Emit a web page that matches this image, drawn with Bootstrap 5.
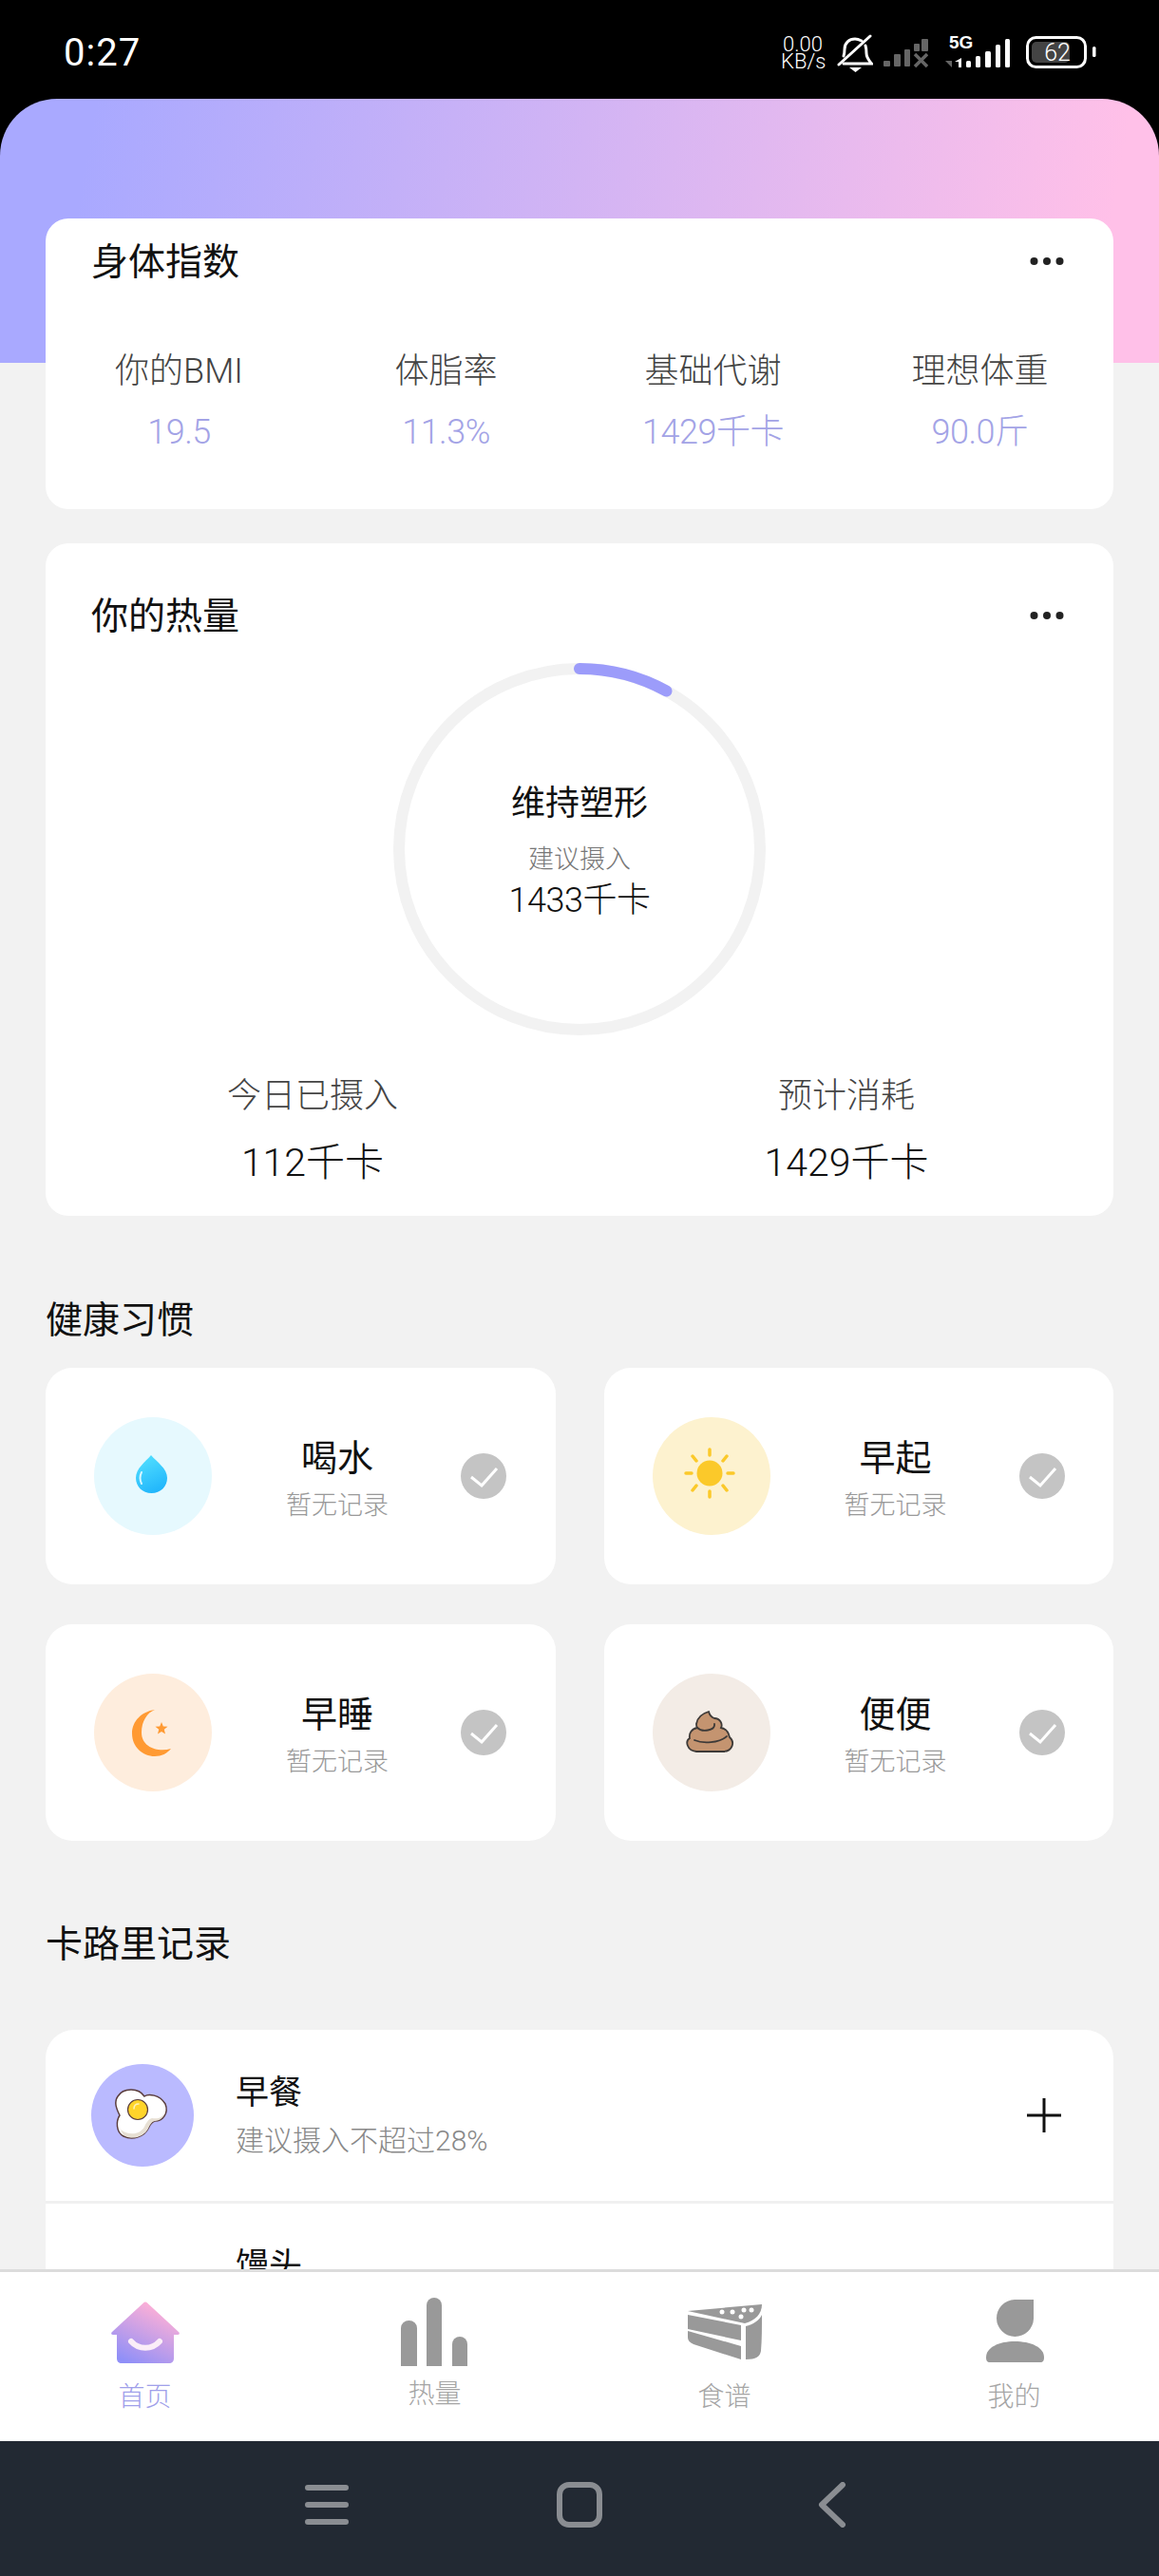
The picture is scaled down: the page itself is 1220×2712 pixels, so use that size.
<!DOCTYPE html>
<html lang="zh-CN">
  <head>
    <meta charset="UTF-8" />
    <meta name="viewport" content="width=device-width, initial-scale=1.0" />
    <title>健康</title>
    <link
      href="https://cdn.jsdelivr.net/npm/bootstrap@5.3.2/dist/css/bootstrap.min.css"
      rel="stylesheet"
    />
    <style>
      body {
        background: #000;
        font-family: Roboto, "Noto Sans CJK SC", sans-serif;
        font-weight: 300;
        color: #111;
      }
      svg {
        display: block;
        flex-shrink: 0;
      }
      /* status bar */
      .status-bar {
        height: 104px;
        padding: 8px 65px 0 67px;
        color: #fff;
      }
      .status-time {
        font-size: 40px;
        line-height: 46px;
        font-weight: 400;
        letter-spacing: 1px;
      }
      .status-net {
        width: 46px;
        font-size: 22px;
        line-height: 18px;
        text-align: center;
        margin-right: 13px;
      }
      .status-signal {
        margin-left: 8px;
      }
      .status-cell {
        margin-left: 18px;
      }
      .status-battery {
        margin-left: 16px;
      }
      /* page */
      .page-main {
        overflow: hidden;
        min-height: 0;
        padding: 126px 48px 0;
        border-radius: 60px 60px 0 0;
        background: linear-gradient(100deg, #a9a9ff 8%, #ffc0e8 94%) top / 100% 278px no-repeat, #f2f2f2;
      }
      .panel {
        border: 0;
        background: #fff;
        border-radius: 24px;
      }
      .panel-head {
        padding: 0 48px;
      }
      .panel-title,
      .section-title {
        font-size: 39px;
        line-height: 46px;
        font-weight: 400;
        color: #111;
      }
      .body-panel {
        height: 306px;
      }
      .body-panel .panel-head {
        padding-top: 23px;
      }
      .stat-row {
        margin-top: 70px;
      }
      .stat-label {
        font-size: 36px;
        line-height: 44px;
        color: #444;
      }
      .stat-value {
        margin-top: 20px;
        font-size: 36px;
        line-height: 44px;
        letter-spacing: -0.5px;
        color: #a3a3e6;
      }
      .heat-panel {
        height: 708px;
        margin-top: 36px;
      }
      .heat-panel .panel-head {
        padding-top: 54px;
      }
      .ring-box {
        width: 392px;
        height: 392px;
        margin: 26px auto 0;
        padding-top: 126px;
      }
      .ring-box svg {
        top: 0;
        left: 0;
      }
      .ring-goal {
        font-size: 36px;
        line-height: 44px;
        font-weight: 400;
        color: #111;
      }
      .ring-hint {
        margin-top: 20px;
        font-size: 27px;
        line-height: 34px;
        color: #777;
      }
      .ring-kcal {
        margin-top: 4px;
        font-size: 36px;
        line-height: 44px;
        letter-spacing: -0.5px;
        color: #111;
      }
      .sum-row {
        margin-top: 42px;
      }
      .sum-label {
        font-size: 36px;
        line-height: 44px;
        color: #444;
      }
      .sum-value {
        margin-top: 23px;
        font-size: 41px;
        line-height: 50px;
        color: #111;
      }
      .section-title {
        margin-top: 87px;
      }
      .habit-grid {
        display: grid;
        grid-template-columns: 1fr 1fr;
        gap: 42px 51px;
        margin-top: 27px;
      }
      .habit-item {
        height: 228px;
        padding-left: 51px;
        border-radius: 28px;
      }
      .habit-icon {
        width: 124px;
        height: 124px;
        border-radius: 50%;
      }
      .icon-water { background: #e6f9fe; }
      .icon-sun { background: #fdf2cf; }
      .icon-moon { background: #feeddd; }
      .icon-poop { background: #f3ece6; }
      .habit-text {
        width: 180px;
        margin-left: 42px;
        padding-top: 7px;
      }
      .habit-name {
        font-size: 38px;
        line-height: 44px;
        font-weight: 400;
        color: #111;
      }
      .habit-sub {
        margin-top: 11px;
        font-size: 27px;
        line-height: 34px;
        color: #999;
      }
      .habit-check {
        margin-left: 40px;
      }
      .meal-title {
        margin-top: 86px;
      }
      .meal-panel {
        margin-top: 67px;
        border-radius: 30px 30px 0 0;
        height: 400px;
      }
      .meal-head {
        height: 183px;
        padding: 0 55px 1px 48px;
        border-bottom: 3px solid #f0f0f0;
      }
      .meal-icon {
        width: 108px;
        height: 108px;
        border-radius: 50%;
        background: #babaff;
        margin-right: 44px;
      }
      .meal-text {
        padding-top: 3px;
      }
      .meal-name {
        font-size: 35px;
        line-height: 44px;
        font-weight: 400;
        color: #111;
      }
      .meal-sub {
        margin-top: 8px;
        font-size: 30px;
        line-height: 40px;
        color: #888;
      }
      .food-name {
        padding: 44px 0 0 200px;
        font-size: 35px;
        line-height: 44px;
        font-weight: 400;
      }
      /* tab bar */
      .tab-bar {
        height: 181px;
        padding-top: 27px;
        background: #fff;
        border-top: 3px solid #dcdcdc;
      }
      .tab-label {
        margin-top: 13px;
        font-size: 28px;
        line-height: 40px;
        color: #a5a5a5;
      }
      .tab-label.active {
        color: #a0a0ea;
      }
      .tab-label.raised {
        margin-top: 10px;
      }
      .nav-bar {
        height: 142px;
        padding: 0 8px 8px 0;
        background: #222933;
      }
      .nav-home {
        margin: 0 227px 0 219px;
      }
    </style>
  </head>
  <body class="m-0">
    <div class="d-flex flex-column vh-100 overflow-hidden">
      <!-- status bar -->
      <div class="status-bar d-flex align-items-center justify-content-between flex-shrink-0">
        <div class="status-time">0:27</div>
        <div class="d-flex align-items-center">
          <div class="status-net"><div>0.00</div><div>KB/s</div></div>
          <svg width="38" height="40" viewBox="0 0 38 40" fill="none" stroke="#fff" stroke-width="3" stroke-linecap="round">
            <path d="M30 12C31 15 31 18 31 20C31 25 34 28 36.5 31H7" />
            <path d="M7 23C8 20 8 18 8 16C8 9 13 5 19 5C22 5 24 6 26 7" />
            <path d="M2 32L35 2" />
            <path d="M13 35H26L19.5 40Z" fill="#fff" stroke="none" />
          </svg>
          <svg class="status-signal" width="50" height="40" viewBox="-3 0 50 40" fill="#666">
            <rect x="0" y="28" width="7" height="6" rx="1" />
            <rect x="11" y="21" width="7" height="13" rx="1" />
            <rect x="22" y="16" width="6" height="18" rx="1" />
            <rect x="32" y="10" width="6" height="8" rx="1" />
            <rect x="40" y="5" width="7" height="13" rx="1" />
            <path d="M33 21L46 34M46 21L33 34" stroke="#666" stroke-width="3.5" fill="none" />
          </svg>
          <svg class="status-cell" width="69" height="44" viewBox="0 -2 69 44" fill="#fff">
            <text x="4" y="15" font-family="Liberation Sans, sans-serif" font-size="19" font-weight="700">5G</text>
            <path d="M0 28H7V35Z" fill="#666" />
            <path d="M10 29L17 25V35H14V29Z" />
            <rect x="22" y="28" width="5" height="7" rx="1.5" />
            <rect x="32" y="23" width="5" height="12" rx="1.5" />
            <rect x="42" y="18" width="6" height="17" rx="1.5" />
            <rect x="53" y="11" width="5" height="24" rx="1.5" />
            <rect x="63" y="5" width="5" height="30" rx="1.5" />
          </svg>
          <svg class="status-battery" width="75" height="40" viewBox="0 0 75 40">
            <rect x="1.5" y="3.5" width="61" height="31" rx="9" fill="none" stroke="#fff" stroke-width="3" />
            <rect x="6" y="8" width="40" height="22" rx="5" fill="#444" />
            <text x="33" y="28" text-anchor="middle" font-family="Roboto, sans-serif" font-size="25" font-weight="300" fill="#fff">62</text>
            <rect x="70" y="13" width="3.5" height="11" rx="1.5" fill="#fff" />
          </svg>
        </div>
      </div>

      <!-- scrolling content -->
      <main class="page-main flex-grow-1">
        <div class="card panel body-panel">
          <div class="panel-head d-flex justify-content-between align-items-center">
            <div class="panel-title">身体指数</div>
            <svg class="me-1" width="36" height="10" viewBox="0 0 36 10" fill="#222"><circle cx="4.5" cy="4" r="4" /><circle cx="18" cy="4" r="4" /><circle cx="31.5" cy="4" r="4" /></svg>
          </div>
          <div class="row g-0 row-cols-4 text-center stat-row">
            <div class="col"><div class="stat-label">你的BMI</div><div class="stat-value">19.5</div></div>
            <div class="col"><div class="stat-label">体脂率</div><div class="stat-value">11.3%</div></div>
            <div class="col"><div class="stat-label">基础代谢</div><div class="stat-value">1429千卡</div></div>
            <div class="col"><div class="stat-label">理想体重</div><div class="stat-value">90.0斤</div></div>
          </div>
        </div>

        <div class="card panel heat-panel">
          <div class="panel-head d-flex justify-content-between align-items-center">
            <div class="panel-title">你的热量</div>
            <svg class="me-1" width="36" height="10" viewBox="0 0 36 10" fill="#222"><circle cx="4.5" cy="4" r="4" /><circle cx="18" cy="4" r="4" /><circle cx="31.5" cy="4" r="4" /></svg>
          </div>
          <div class="ring-box position-relative text-center">
            <svg class="position-absolute" width="392" height="392" viewBox="0 0 392 392" fill="none" stroke-width="12">
              <circle cx="196" cy="196" r="190" stroke="#f2f2f2" />
              <circle cx="196" cy="196" r="190" stroke="#9c9cfa" stroke-linecap="round" stroke-dasharray="95.5 1200" transform="rotate(-90 196 196)" />
            </svg>
            <div class="position-relative">
              <div class="ring-goal">维持塑形</div>
              <div class="ring-hint">建议摄入</div>
              <div class="ring-kcal">1433千卡</div>
            </div>
          </div>
          <div class="row g-0 text-center sum-row">
            <div class="col-6"><div class="sum-label">今日已摄入</div><div class="sum-value">112千卡</div></div>
            <div class="col-6"><div class="sum-label">预计消耗</div><div class="sum-value">1429千卡</div></div>
          </div>
        </div>

        <div class="section-title">健康习惯</div>
        <div class="habit-grid">
          <div class="card panel habit-item flex-row align-items-center">
            <div class="habit-icon icon-water">
              <svg width="124" height="124" viewBox="0 0 124 124">
                <defs><linearGradient id="dropFill" x1="0.3" y1="0" x2="0.7" y2="1"><stop offset="0" stop-color="#52dfff" /><stop offset="1" stop-color="#1fb4fb" /></linearGradient></defs>
                <path d="M60 40C54 47 44 54 44 64C44 73 51 80 60.500 80C70 80 77 73 77 64C77 54 66 47 60 40Z" fill="url(#dropFill)" />
                <path d="M50 58C48 62 48 66 50 70" fill="none" stroke="#d8f6ff" stroke-width="2" stroke-linecap="round" />
              </svg>
            </div>
            <div class="habit-text text-center"><div class="habit-name">喝水</div><div class="habit-sub">暂无记录</div></div>
            <svg class="habit-check" width="48" height="48" viewBox="0 0 48 48"><circle cx="24" cy="24" r="24" fill="#c4c4c4" /><path d="M11 25L22 34L38 16" fill="none" stroke="#fff" stroke-width="3" /></svg>
          </div>
          <div class="card panel habit-item flex-row align-items-center">
            <div class="habit-icon icon-sun">
              <svg width="124" height="124" viewBox="0 0 124 124">
                <circle cx="60" cy="59" r="13.500" fill="#fbc92a" />
                <path d="M60 34V40M60 78V84M35 59H41M79 59H85M42 41L46 46M78 41L74 46M42 77L46 72M78 77L74 72" stroke="#fbc92a" stroke-width="3.500" stroke-linecap="round" />
              </svg>
            </div>
            <div class="habit-text text-center"><div class="habit-name">早起</div><div class="habit-sub">暂无记录</div></div>
            <svg class="habit-check" width="48" height="48" viewBox="0 0 48 48"><circle cx="24" cy="24" r="24" fill="#c4c4c4" /><path d="M11 25L22 34L38 16" fill="none" stroke="#fff" stroke-width="3" /></svg>
          </div>
          <div class="card panel habit-item flex-row align-items-center">
            <div class="habit-icon icon-moon">
              <svg width="124" height="124" viewBox="0 0 124 124" fill="#ff9a33">
                <path d="M64 38C50 40 40 50 40 63C40 77 51 87 64 87C71 87 77 84 81 79C68 83 50 78 50 62C50 50 56 41 64 38Z" />
                <path d="M71 51L72.800 55.500L77.500 55.800L73.800 58.800L75 63.500L71 60.900L67 63.500L68.200 58.800L64.500 55.800L69.200 55.500Z" />
              </svg>
            </div>
            <div class="habit-text text-center"><div class="habit-name">早睡</div><div class="habit-sub">暂无记录</div></div>
            <svg class="habit-check" width="48" height="48" viewBox="0 0 48 48"><circle cx="24" cy="24" r="24" fill="#c4c4c4" /><path d="M11 25L22 34L38 16" fill="none" stroke="#fff" stroke-width="3" /></svg>
          </div>
          <div class="card panel habit-item flex-row align-items-center">
            <div class="habit-icon icon-poop">
              <svg width="124" height="124" viewBox="0 0 124 124" stroke="#3d3a38" stroke-width="1.800" stroke-linecap="round">
                <path d="M59 40C52 42 47 46 46 53C46 55 46 56 47 57C41 58 38 63 39 68C34 71 36 81 46 82H74C84 82 87 72 81 67C80 62 77 58 72 57C74 53 71 47 65 47C62 46 60 44 59 40Z" fill="#c49470" />
                <path d="M47 57C52 62 66 60 65 53M44 70C53 74 70 73 78 66" fill="none" />
              </svg>
            </div>
            <div class="habit-text text-center"><div class="habit-name">便便</div><div class="habit-sub">暂无记录</div></div>
            <svg class="habit-check" width="48" height="48" viewBox="0 0 48 48"><circle cx="24" cy="24" r="24" fill="#c4c4c4" /><path d="M11 25L22 34L38 16" fill="none" stroke="#fff" stroke-width="3" /></svg>
          </div>
        </div>

        <div class="section-title meal-title">卡路里记录</div>
        <div class="card panel meal-panel">
          <div class="meal-head d-flex align-items-center">
            <div class="meal-icon flex-shrink-0">
              <svg width="108" height="108" viewBox="0 0 108 108">
                <path d="M42 27C50 27 54 31 56 34C60 31 72 32 78 42C82 52 75 60 67 60C63 61 62 64 60 68C56 76 44 81 34 76C26 72 26 60 30 54C26 46 24 40 28 34C31 29 37 27 42 27Z" fill="#fff" stroke="#5a3d3d" stroke-width="1.500" />
                <path d="M78 50C75 57 70 58 64 57C60 58 58 62 56 66C52 74 40 76 31 69C33 73 34 75 36 76C45 80 56 76 60 68C62 64 63 61 67 60C72 60 77 56 78 50Z" fill="#e7e0d4" />
                <ellipse cx="49" cy="48" rx="10.500" ry="10.500" fill="#ffd42a" stroke="#5a3d3d" stroke-width="1.200" />
                <path d="M45 47C45 44 47 42 50 42" fill="none" stroke="#fff3b8" stroke-width="1.500" stroke-linecap="round" />
              </svg>
            </div>
            <div class="meal-text flex-grow-1">
              <div class="meal-name">早餐</div>
              <div class="meal-sub">建议摄入不超过28%</div>
            </div>
            <svg width="36" height="36" viewBox="0 0 36 36" stroke="#111" stroke-width="3"><path d="M0 18H36M18 0V36" /></svg>
          </div>
          <div class="food-name">馒头</div>
        </div>
      </main>

      <!-- tab bar -->
      <div class="tab-bar row g-0 text-center flex-shrink-0">
        <div class="col-3 d-flex flex-column align-items-center">
          <svg width="80" height="72" viewBox="0 0 80 72">
            <defs><linearGradient id="homeFill" x1="0.75" y1="0.1" x2="0.25" y2="1"><stop offset="0" stop-color="#ffb0d6" /><stop offset="1" stop-color="#8f8ff8" /></linearGradient></defs>
            <path d="M38 5.500C39 4 41 4 42 5.500L75 36C76.500 37.500 76 39 74 39H70V64C70 67 68 69 65 69H15C12 69 10 67 10 64V39H6C4 39 3.500 37.500 5 36Z" fill="url(#homeFill)" />
            <path d="M25 46C33 55 47 55 55 46" fill="none" stroke="#fbeef8" stroke-width="6" stroke-linecap="round" />
          </svg>
          <div class="tab-label active">首页</div>
        </div>
        <div class="col-3 d-flex flex-column align-items-center">
          <svg width="80" height="72" viewBox="0 0 80 72" fill="#999">
            <path d="M4 72V32A8.500 8 0 0 1 21 32V72Z" />
            <path d="M31 72V8A8 8 0 0 1 47 8V72Z" />
            <path d="M58 72V49A8 8 0 0 1 74 49V72Z" />
          </svg>
          <div class="tab-label raised">热量</div>
        </div>
        <div class="col-3 d-flex flex-column align-items-center">
          <svg width="80" height="72" viewBox="0 0 80 72" fill="#999">
            <path d="M1 14L79 7C79 17 72 24 61 27Z" />
            <path d="M1 18L57 29V45L1 33Z" />
            <path d="M1 35L57 51V65L7 49C3 47 1 45 1 42Z" />
            <path d="M62 30C70 28 76 24 79 18C79 32 79 44 78 56C77 62 73 65 62 65Z" />
            <g fill="#fff"><circle cx="37" cy="15" r="2.500" /><circle cx="48" cy="15" r="2.500" /><circle cx="60" cy="13" r="2.500" /><circle cx="68" cy="13" r="2.500" /><circle cx="57" cy="20" r="2.500" /></g>
          </svg>
          <div class="tab-label">食谱</div>
        </div>
        <div class="col-3 d-flex flex-column align-items-center">
          <svg width="80" height="72" viewBox="0 0 80 72" fill="#999">
            <path d="M40 2H60V22A19.500 19.500 0 1 1 40 2Z" />
            <path d="M10 63C10 52 24 46 40 46C57 46 71 52 71 63C71 66 70 68 67 68H14C11 68 10 66 10 63Z" />
          </svg>
          <div class="tab-label">我的</div>
        </div>
      </div>

      <!-- system navigation -->
      <div class="nav-bar d-flex align-items-center justify-content-center flex-shrink-0">
        <svg width="46" height="48" viewBox="0 0 46 48" stroke="#8a8d92" stroke-width="6" stroke-linecap="round"><path d="M3 6H43M3 24H43M3 42H43" /></svg>
        <svg class="nav-home" width="48" height="48" viewBox="0 0 48 48" fill="none" stroke="#8a8d92" stroke-width="6"><rect x="3" y="3" width="42" height="42" rx="10" /></svg>
        <svg width="30" height="48" viewBox="0 0 30 48" fill="none" stroke="#8a8d92" stroke-width="6" stroke-linecap="round" stroke-linejoin="round"><path d="M26 3L4 24L26 45" /></svg>
      </div>
    </div>
    <script src="https://cdn.jsdelivr.net/npm/bootstrap@5.3.2/dist/js/bootstrap.bundle.min.js"></script>
  </body>
</html>
